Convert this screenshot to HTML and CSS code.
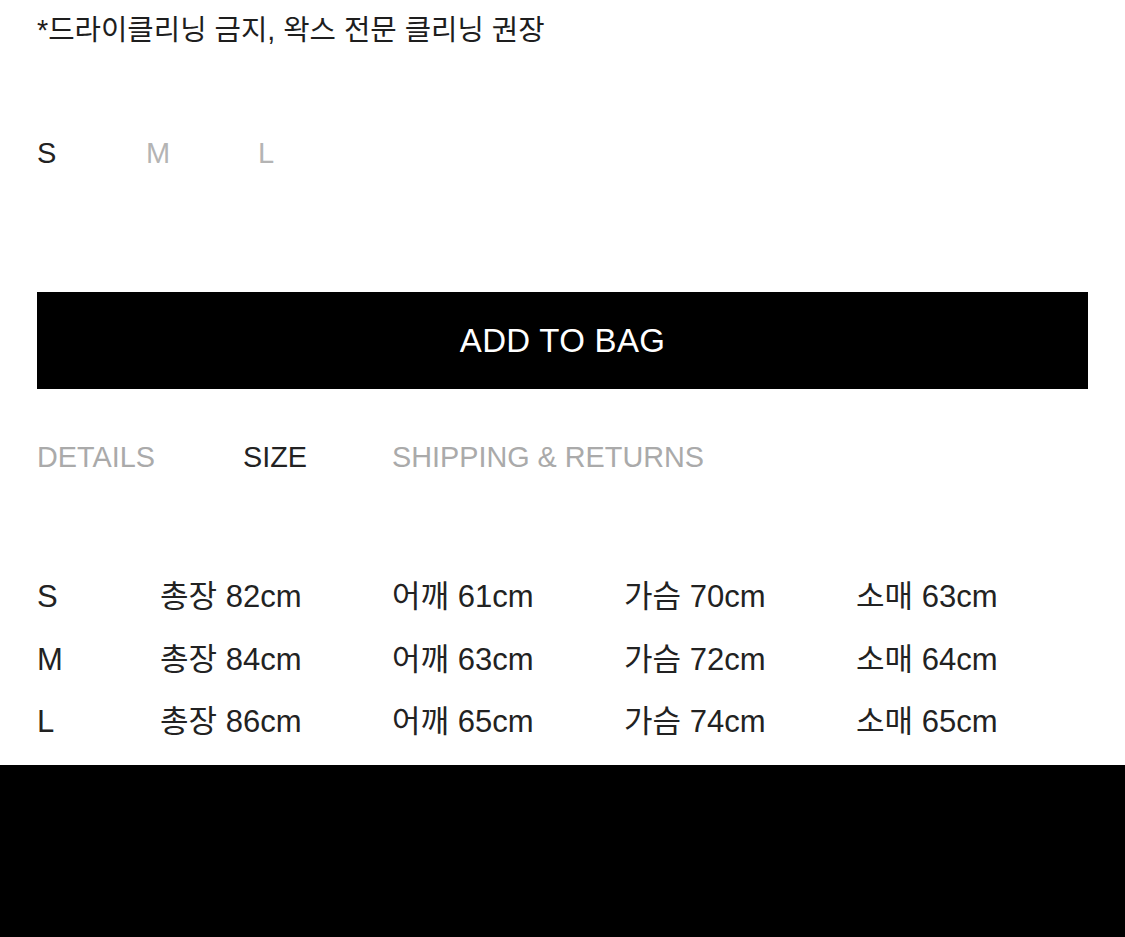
FILE: index.html
```html
<!DOCTYPE html>
<html>
    <head>
        <meta charset="utf-8">
        <link rel="stylesheet" href="styles.css">
    </head>

    <body>
        <main class="product">
            <p class="care">*드라이클리닝 금지, 왁스 전문 클리닝 권장</p>

            <ul class="sizes">
                <li class="selected">S</li>
                <li>M</li>
                <li>L</li>
            </ul>

            <button class="add-to-bag">ADD TO BAG</button>

            <nav class="tabs">
                <span>DETAILS</span>
                <span class="active">SIZE</span>
                <span>SHIPPING &amp; RETURNS</span>
            </nav>

            <div class="size-table">
                <span>S</span><span>총장 82cm</span><span>어깨 61cm</span><span>가슴 70cm</span><span>소매 63cm</span>
                <span>M</span><span>총장 84cm</span><span>어깨 63cm</span><span>가슴 72cm</span><span>소매 64cm</span>
                <span>L</span><span>총장 86cm</span><span>어깨 65cm</span><span>가슴 74cm</span><span>소매 65cm</span>
            </div>
        </main>

        <footer class="bottom-bar"></footer>
    </body>
</html>
```

FILE: styles.css
```css
html, body {
    margin: 0;
    background: #fff;
}
body {
    font-family: "Liberation Sans", "Noto Sans CJK KR", sans-serif;
    color: #222;
}

.product {
    padding: 10px 37px 0;
}

.care {
    margin: 0;
    font-size: 28.7px;
    line-height: 40px;
    color: #1e1e1e;
}

.sizes {
    display: flex;
    margin: 83px 0 0;
    padding: 0;
    list-style: none;
    font-size: 29px;
    line-height: 40px;
}
.sizes > li {
    width: 109px;
    color: #b4b4b4;
}
.sizes > li:nth-child(2) {
    width: 112px;
}
.sizes > li.selected {
    color: #222;
}

.add-to-bag {
    display: block;
    width: 100%;
    height: 97px;
    margin-top: 119px;
    padding: 0;
    border: 0;
    background: #000;
    color: #fff;
    font-family: inherit;
    font-size: 33px;
    letter-spacing: 0.3px;
}

.tabs {
    display: flex;
    margin-top: 48px;
    font-size: 28.8px;
    line-height: 40px;
    color: #aaa;
}
.tabs > span:nth-child(1) {
    width: 206px;
}
.tabs > span:nth-child(2) {
    width: 149px;
}
.tabs > .active {
    color: #222;
}

.size-table {
    display: grid;
    grid-template-columns: 123px 232px 232px 232px 232px;
    grid-auto-rows: 62.5px;
    align-items: center;
    margin-top: 89px;
    font-size: 31px;
    color: #222;
}
.size-table > span {
    line-height: 40px;
}

.bottom-bar {
    height: 173px;
    margin-top: 11px;
    background: #000;
}
```
